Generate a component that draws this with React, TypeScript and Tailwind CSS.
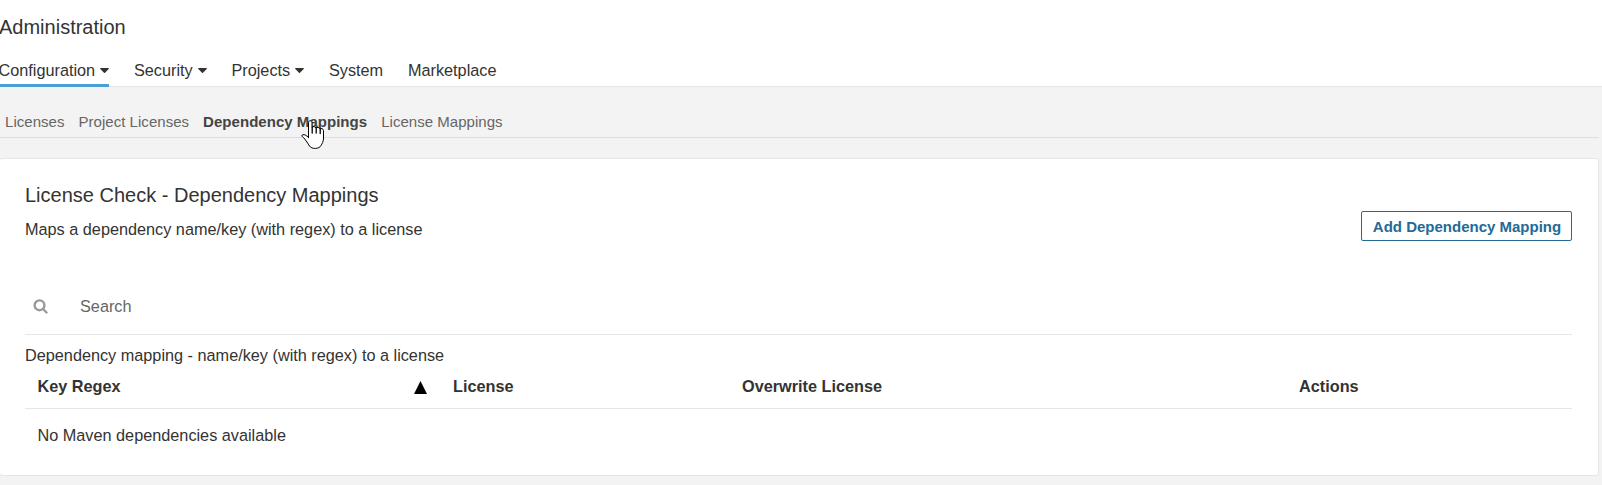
import React from 'react';

function Caret() {
  return (
    <svg className="ml-[5px] mt-px block" width="9" height="5" viewBox="0 0 9 5" fill="#333">
      <path d="M.7 0h7.6c.6 0 .8.6.4 1L5 4.7c-.3.3-.7.3-1 0L.3 1C-.1.6.1 0 .7 0z" />
    </svg>
  );
}

function NavItem({ label, caret, active }: { label: string; caret?: boolean; active?: boolean }) {
  return (
    <a
      className={
        active
          ? 'flex h-[34px] items-center border-b-3 border-[#4b9fd5] pt-[3px]'
          : 'flex h-[34px] items-center border-b-3 border-transparent pt-[3px]'
      }
    >
      <span>{label}</span>
      {caret && <Caret />}
    </a>
  );
}

function HandCursor() {
  return (
    <svg
      className="pointer-events-none absolute left-[301px] top-[120px]"
      width="24"
      height="30"
      viewBox="0 0 24 30"
      fill="#fff"
      stroke="#000"
      strokeWidth="1"
      strokeLinejoin="round"
      strokeLinecap="round"
    >
      <path d="M7.500 17.500V2.500c0-2.300 3.500-2.300 3.500 0V7.500c.6-1.400 3.500-1.100 4 .5.8-1 3.500-.7 4 .9.9-.8 3.500-.3 3.500 1.800v7.300c0 4-1.500 5.500-2.500 7.500-1.500 3.700-9.500 3.900-11.500.500-1.500-2.500-3.500-5.500-5.500-8C2 17.200 1 16.500.8 15.900c-.1-1.200 1.900-1.600 3.400-.9 1.300.6 2.300 1.500 3.300 2.500z" />
      <path d="M11.200 7.500v5.500M15.200 8v5M19.200 9v4.500" fill="none" strokeWidth="1.300" />
    </svg>
  );
}

export default function App() {
  return (
    <div className="relative h-[485px] w-[1602px] overflow-hidden bg-[#f3f3f3] font-['Liberation_Sans',Arial,sans-serif] text-[16.25px] leading-5 text-[#333]">
      <header className="h-[87px] border-b border-[#e6e6e6] bg-white pt-[14px]">
        <h1 className="-ml-px text-[20px] leading-[26px]">Administration</h1>
        <nav className="-ml-[1.5px] mt-[13px] flex gap-[24.8px]">
          <NavItem label="Configuration" caret active />
          <NavItem label="Security" caret />
          <NavItem label="Projects" caret />
          <NavItem label="System" />
          <NavItem label="Marketplace" />
        </nav>
      </header>

      <div className="mr-[3px]">
        <nav className="flex h-[51px] items-center gap-[14px] border-b border-[#ddd] pl-[5px] pt-[22px] pb-[2px] text-[15px] tracking-[0.035px] text-[#666]">
          <a>Licenses</a>
          <a>Project Licenses</a>
          <a className="font-bold text-[#444]">Dependency Mappings</a>
          <a>License Mappings</a>
        </nav>

        <main className="-ml-px mt-5 h-[318px] rounded-[3px] border border-[#e6e6e6] bg-white pl-[25px] pr-[26px]">
          <div className="flex h-[104px] justify-between">
            <div className="pt-[23px]">
              <h2 className="text-[20px] leading-[26px]">License Check - Dependency Mappings</h2>
              <p className="mt-[11px]">Maps a dependency name/key (with regex) to a license</p>
            </div>
            <button className="mt-[52px] h-[30px] w-[211px] rounded-[2px] border border-[#236a97] pl-px pt-px text-[15px] font-bold text-[#236a97]">
              Add Dependency Mapping
            </button>
          </div>

          <div className="flex h-[72px] items-center border-b border-[#e6e6e6] pl-[8px] pt-[15px] text-[#666]">
            <svg width="15" height="15" viewBox="0 0 15 15" fill="none" stroke="#999" strokeWidth="2.400">
              <circle cx="6.500" cy="6.300" r="4.900" />
              <path d="M10 10l3.500 3.500" strokeLinecap="round" />
            </svg>
            <span className="ml-[32px]">Search</span>
          </div>

          <table className="w-full table-fixed text-left">
            <caption className="pt-[10px] text-left">
              Dependency mapping - name/key (with regex) to a license
            </caption>
            <colgroup>
              <col className="w-[416px]" />
              <col className="w-[289px]" />
              <col className="w-[557px]" />
              <col />
            </colgroup>
            <thead>
              <tr className="h-[43px] border-b border-[#e6e6e6]">
                <th className="pl-[12.5px] pr-[14px] pb-px">
                  <div className="flex items-center justify-between">
                    <span>Key Regex</span>
                    <svg className="mt-[3px]" width="13" height="13" viewBox="0 0 13 13">
                      <path d="M6.500 0L13 13H0z" fill="#000" />
                    </svg>
                  </div>
                </th>
                <th className="px-[12px] pb-px">License</th>
                <th className="px-[12px] pb-px">Overwrite License</th>
                <th className="px-[12px] pb-px">Actions</th>
              </tr>
            </thead>
            <tbody>
              <tr className="h-[54px]">
                <td className="px-[12.5px]" colSpan={4}>No Maven dependencies available</td>
              </tr>
            </tbody>
          </table>
        </main>
      </div>
      <HandCursor />
    </div>
  );
}
